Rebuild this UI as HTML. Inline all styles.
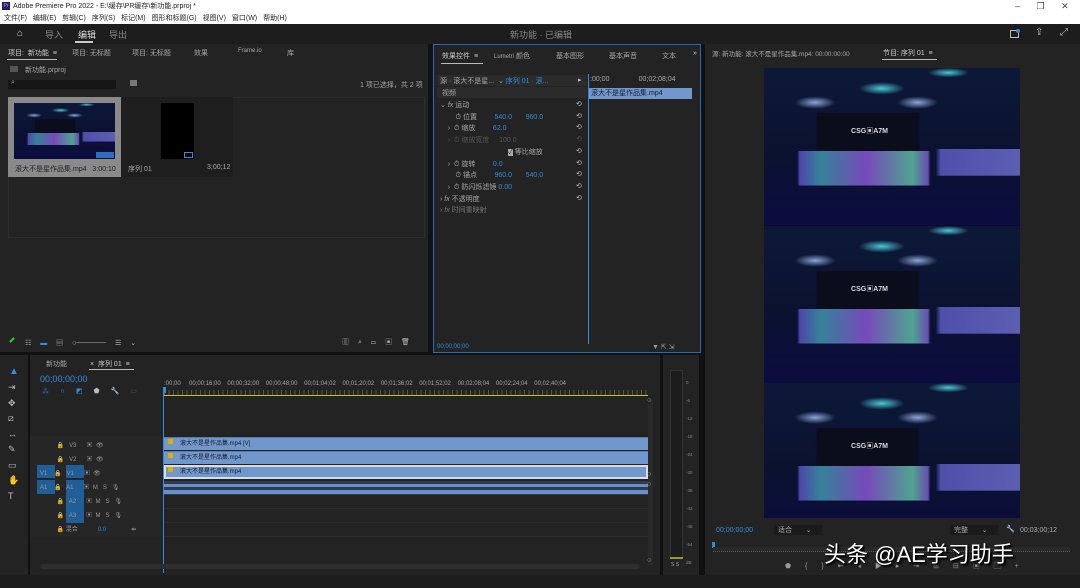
<!DOCTYPE html>
<html><head><meta charset="utf-8"><style>
*{margin:0;padding:0;box-sizing:border-box}
body{width:1080px;height:588px;overflow:hidden;background:#111;font-family:"Liberation Sans","Noto Sans CJK SC",sans-serif;font-size:7px;color:#a8a8a8;position:relative}
.a{position:absolute;white-space:nowrap}
.p{position:absolute;background:#232323}
.blue{color:#2f8ce0}
.vid{position:absolute;overflow:hidden;background:
linear-gradient(90deg,transparent 13%,rgba(90,80,190,.85) 14%,rgba(60,150,170,.85) 22%,rgba(130,80,200,.9) 40%,rgba(90,190,160,.85) 58%,rgba(120,90,200,.85) 64%,transparent 65%) 0 68%/100% 22% no-repeat,
linear-gradient(90deg,transparent 67%,rgba(100,100,210,.75) 69%,rgba(120,120,220,.75) 100%) 0 62%/100% 17% no-repeat,
linear-gradient(90deg,transparent 20%,#0b0c1c 21%,#0b0c1c 60%,transparent 61%) 0 38%/100% 25% no-repeat,
radial-gradient(ellipse 9% 4% at 46% 13%,rgba(80,220,230,.9),transparent),
radial-gradient(ellipse 8% 3% at 72% 3%,rgba(80,220,230,.9),transparent),
radial-gradient(ellipse 8% 4% at 20% 22%,rgba(170,200,255,.8),transparent),
radial-gradient(ellipse 8% 4% at 60% 22%,rgba(170,200,255,.8),transparent),
linear-gradient(#0d1838,#0b1230 55%,#0c0c40)}
.vid span{position:absolute;left:34%;top:37%;color:#ddd;font-weight:bold;font-size:7px}
.trk{position:absolute;left:164px;width:484px;background:#7098cc;border-top:1px solid #5a7aa8}
</style></head><body>
<div class="a" style="left:0;top:0;width:1080px;height:24px;background:#fff"></div>
<div class="a" style="left:2px;top:2px;width:8px;height:8px;background:#2a1f5e;color:#b9a7ff;font-size:5px;line-height:8px;text-align:center">Pr</div>
<div class="a" style="left:13px;top:1px;color:#222;font-size:7px">Adobe Premiere Pro 2022 - E:\缓存\PR缓存\新功能.prproj *</div>
<div class="a" style="left:4px;top:13px;color:#222;font-size:7px;word-spacing:4px">文件(F) 编辑(E) 剪辑(C) 序列(S) 标记(M) 图形和标题(G) 视图(V) 窗口(W) 帮助(H)</div>
<div class="a" style="left:1015px;top:1px;color:#444;font-size:9px;word-spacing:14px">– ❐ ✕</div>
<div class="a" style="left:0;top:24px;width:1080px;height:20px;background:#1d1d1d"></div>
<div class="a" style="left:17px;top:28px;color:#ccc;font-size:10px">⌂</div>
<div class="a" style="left:45px;top:28px;color:#888;font-size:9px">导入</div>
<div class="a" style="left:78px;top:28px;color:#ddd;font-size:9px">编辑</div>
<div class="a" style="left:75px;top:41px;width:18px;height:2px;background:#ccc"></div>
<div class="a" style="left:109px;top:28px;color:#888;font-size:9px">导出</div>
<div class="a" style="left:510px;top:28px;color:#888;font-size:9px">新功能 · 已编辑</div>
<div class="a" style="left:1010px;top:30px;width:9px;height:8px;border:1px solid #bbb"></div>
<div class="a" style="left:1016px;top:29px;width:4px;height:4px;background:#2f8ce0;border-radius:50%"></div>
<div class="a" style="left:1035px;top:27px;color:#bbb;font-size:10px">⇪</div>
<div class="a" style="left:1060px;top:27px;color:#bbb;font-size:10px">⤢</div>

<div class="p" style="left:0;top:44px;width:428px;height:308px"></div>
<div class="a" style="left:8px;top:48px;color:#ccc;word-spacing:2px">项目: 新功能 ≡</div>
<div class="a" style="left:7px;top:59px;width:50px;height:1px;background:#bbb"></div>
<div class="a" style="left:72px;top:48px">项目: 无标题</div>
<div class="a" style="left:132px;top:48px">项目: 无标题</div>
<div class="a" style="left:194px;top:48px">效果</div>
<div class="a" style="left:238px;top:48px;font-size:6px">Frame.io</div>
<div class="a" style="left:287px;top:48px">库</div>
<div class="a" style="left:10px;top:66px;width:8px;height:6px;background:#555"></div>
<div class="a" style="left:25px;top:65px">新功能.prproj</div>
<div class="a" style="left:8px;top:80px;width:108px;height:9px;background:#161616"></div>
<div class="a" style="left:11px;top:79px;color:#aaa">⌕</div>
<div class="a" style="left:130px;top:80px;width:7px;height:6px;background:#777"></div>
<div class="a" style="left:360px;top:80px">1 项已选择，共 2 项</div>
<div class="a" style="left:8px;top:97px;width:417px;height:141px;border:1px solid #2d2d2d"></div>
<div class="a" style="left:8px;top:97px;width:113px;height:80px;background:#8a8a8a"></div>
<div class="vid" style="left:14px;top:103px;width:101px;height:56px"></div>
<div class="a" style="left:96px;top:152px;width:18px;height:6px;background:#2f6cc0"></div>
<div class="a" style="left:15px;top:164px;color:#222">滚大不是星作品集.mp4 &nbsp; 3:00:10</div>
<div class="a" style="left:121px;top:97px;width:112px;height:80px;background:#1e1e1e"></div>
<div class="a" style="left:161px;top:103px;width:33px;height:56px;background:#000"></div>
<div class="a" style="left:184px;top:152px;width:9px;height:6px;border:1px solid #2f8ce0"></div>
<div class="a" style="left:128px;top:164px">序列 01</div>
<div class="a" style="left:207px;top:164px">3;00;12</div>
<div class="a" style="left:9px;top:339px;width:6px;height:2px;background:#3c3;transform:rotate(-45deg)"></div>
<div class="a" style="left:25px;top:338px;color:#bbb;word-spacing:7px">☷ <span class="blue">▬</span> ▤ ○────── ☰ ⌄</div>
<div class="a" style="left:342px;top:337px;color:#bbb;word-spacing:7px">▥ ⌕ ▭ ▣ 🗑</div>

<div class="p" style="left:433px;top:44px;width:268px;height:309px;border:1px solid #2a6ab0"></div>
<div class="a" style="left:442px;top:51px;color:#ccc;word-spacing:2px">效果控件 ≡</div>
<div class="a" style="left:441px;top:63px;width:42px;height:1px;background:#bbb"></div>
<div class="a" style="left:494px;top:51px"><span style="font-size:6px">Lumetri</span> 颜色</div>
<div class="a" style="left:556px;top:51px">基本图形</div>
<div class="a" style="left:609px;top:51px">基本声音</div>
<div class="a" style="left:662px;top:51px">文本</div>
<div class="a" style="left:693px;top:50px;color:#ccc">»</div>
<div class="a" style="left:437px;top:75px;width:150px;height:11px;background:#2b2b2b"></div>
<div class="a" style="left:440px;top:76px">源 · 滚大不是星... &nbsp;⌄ <span class="blue">序列 01 · 滚...</span></div>
<div class="a" style="left:578px;top:76px;color:#bbb">▸</div>
<div class="a" style="left:437px;top:87px;width:150px;height:11px;background:#2b2b2b"></div>
<div class="a" style="left:442px;top:88px">视频</div>
<div class="a" style="left:440px;top:100px;line-height:11.7px">
⌄ <i>fx</i> 运动<br>
&nbsp; &nbsp; &nbsp; &nbsp; ⏱ 位置 &nbsp; &nbsp; &nbsp; &nbsp; <span class="blue">540.0 &nbsp; &nbsp; &nbsp; 960.0</span><br>
&nbsp; &nbsp; › &nbsp;⏱ 缩放 &nbsp; &nbsp; &nbsp; &nbsp; <span class="blue">62.0</span><br>
<span style="color:#555">&nbsp; &nbsp; › &nbsp;⏱ 缩放宽度 &nbsp; &nbsp; 100.0</span><br>
&nbsp; &nbsp; &nbsp; &nbsp; &nbsp; &nbsp; &nbsp; &nbsp; &nbsp; &nbsp; &nbsp; &nbsp; &nbsp; &nbsp; &nbsp; &nbsp; &nbsp; &nbsp;<span style="background:#aaa;color:#333">✓</span> 等比缩放<br>
&nbsp; &nbsp; › &nbsp;⏱ 旋转 &nbsp; &nbsp; &nbsp; &nbsp; <span class="blue">0.0</span><br>
&nbsp; &nbsp; &nbsp; &nbsp; ⏱ 锚点 &nbsp; &nbsp; &nbsp; &nbsp; <span class="blue">960.0 &nbsp; &nbsp; &nbsp; 540.0</span><br>
&nbsp; &nbsp; › &nbsp;⏱ 防闪烁滤镜 <span class="blue">0.00</span><br>
› <i>fx</i> 不透明度<br>
<span style="color:#777">› <i>fx</i> 时间重映射</span></div>
<div class="a" style="left:576px;top:99px;color:#bbb;line-height:11.7px">⟲<br>⟲<br>⟲<br><span style="color:#555">⟲</span><br>⟲<br>⟲<br>⟲<br>⟲<br>⟲</div>
<div class="a" style="left:588px;top:74px;width:1px;height:270px;background:#2f8ce0"></div>
<div class="a" style="left:590px;top:76px">:00;00 &nbsp; &nbsp; &nbsp; &nbsp; &nbsp; &nbsp; &nbsp; 00;02;08;04</div>
<div class="a" style="left:589px;top:88px;width:103px;height:11px;background:#7098cc;color:#1a1a2a;padding-left:2px;line-height:11px">滚大不是星作品集.mp4</div>
<div class="a" style="left:437px;top:344px;font-size:6px"><span class="blue">00;00;00;00</span></div>
<div class="a" style="left:652px;top:343px;color:#999">▼ ⇱ ⇲</div>

<div class="p" style="left:705px;top:44px;width:375px;height:531px"></div>
<div class="a" style="left:712px;top:48px;font-size:6.5px">源: 新功能: 滚大不是星作品集.mp4: 00:00:00:00</div>
<div class="a" style="left:883px;top:48px;color:#ccc">节目: 序列 01 &nbsp;≡</div>
<div class="a" style="left:882px;top:59px;width:55px;height:1px;background:#bbb"></div>
<div class="a" style="left:764px;top:68px;width:256px;height:450px;background:#0a0a30"></div>
<div class="vid" style="left:764px;top:68px;width:256px;height:157px"><span>CSG▣A7M</span></div>
<div class="vid" style="left:764px;top:226px;width:256px;height:157px"><span>CSG▣A7M</span></div>
<div class="vid" style="left:764px;top:383px;width:256px;height:157px;clip-path:inset(0 0 22px 0)"><span>CSG▣A7M</span></div>
<div class="a blue" style="left:716px;top:527px;font-size:7px">00;00;00;00</div>
<div class="a" style="left:774px;top:525px;width:48px;height:10px;background:#1b1b1b;padding-left:4px">适合 &nbsp; &nbsp; &nbsp; ⌄</div>
<div class="a" style="left:950px;top:525px;width:48px;height:10px;background:#1b1b1b;padding-left:4px">完整 &nbsp; &nbsp; &nbsp; ⌄</div>
<div class="a" style="left:1006px;top:525px;color:#bbb">🔧</div>
<div class="a" style="left:1020px;top:527px">00;03;00;12</div>
<div class="a" style="left:712px;top:542px;width:3px;height:6px;background:#2f8ce0"></div>
<div class="a" style="left:713px;top:547px;width:357px;height:5px;background:#2a2a2a;border-bottom:1px dotted #555"></div>
<div class="a" style="left:785px;top:561px;color:#999;word-spacing:12px">⬟ { } ⇤ ◂ ▶ ▸ ⇥ ⊞ ⊟ ▣ ▢ +</div>
<div class="a" style="left:824px;top:537px;color:#fff;font-size:22px;text-shadow:1px 1px 1px #000,2px 2px 2px #000">头条 @AE学习助手</div>

<div class="p" style="left:0;top:355px;width:28px;height:220px"></div>
<div class="a" style="left:9px;top:366px;color:#2f8ce0;font-size:10px">▲</div>
<div class="a" style="left:8px;top:380px;color:#bbb;font-size:9px;line-height:15.5px">⇥<br>✥<br>⧄<br>↔<br>✎<br>▭<br>✋<br>T</div>

<div class="p" style="left:30px;top:355px;width:630px;height:220px"></div>
<div class="a" style="left:46px;top:359px">新功能</div>
<div class="a" style="left:90px;top:359px;color:#ccc">× &nbsp;序列 01 &nbsp;≡</div>
<div class="a" style="left:89px;top:369px;width:45px;height:1px;background:#bbb"></div>
<div class="a blue" style="left:40px;top:374px;font-size:9px">00;00;00;00</div>
<div class="a" style="left:42px;top:386px;color:#2f8ce0;word-spacing:9px">⁂ ∩ ◩ <span style="color:#bbb">⬟ 🔧 <span style="color:#555">▭</span></span></div>
<div class="a" style="left:164px;top:381px;font-size:6px">:00;00 &nbsp; &nbsp; 00;00;16;00 &nbsp; &nbsp;00;00;32;00 &nbsp; &nbsp;00;00;48;00 &nbsp; &nbsp;00;01;04;02 &nbsp; &nbsp;00;01;20;02 &nbsp; &nbsp;00;01;36;02 &nbsp; &nbsp;00;01;52;02 &nbsp; &nbsp;00;02;08;04 &nbsp; &nbsp;00;02;24;04 &nbsp; &nbsp;00;02;40;04</div>
<div class="a" style="left:164px;top:390px;width:484px;height:5px;background:repeating-linear-gradient(90deg,#555 0 1px,transparent 1px 4.5px)"></div>
<div class="a" style="left:164px;top:395px;width:484px;height:1px;background:#c8c800"></div>
<div class="a" style="left:163px;top:388px;width:1px;height:185px;background:#2f8ce0"></div>
<div class="a" style="left:163px;top:387px;width:3px;height:6px;background:#2f8ce0"></div>
<div class="a" style="left:30px;top:436px;width:133px;height:102px;background:#262626"></div>
<div class="a" style="left:37px;top:465px;width:18px;height:13px;background:#1f5e96"></div>
<div class="a" style="left:37px;top:480px;width:18px;height:14px;background:#1f5e96"></div>
<div class="a" style="left:66px;top:465px;width:18px;height:13px;background:#1f5e96"></div>
<div class="a" style="left:66px;top:480px;width:18px;height:43px;background:#1f5e96"></div>
<div class="a" style="left:40px;top:439px;line-height:14px;font-size:6px;color:#999">
&nbsp; &nbsp; &nbsp; &nbsp; &nbsp; 🔒 &nbsp; V3 &nbsp; &nbsp; &nbsp;▣ &nbsp;👁<br>
&nbsp; &nbsp; &nbsp; &nbsp; &nbsp; 🔒 &nbsp; V2 &nbsp; &nbsp; &nbsp;▣ &nbsp;👁<br>
V1 &nbsp; &nbsp;🔒 &nbsp; V1 &nbsp; &nbsp; &nbsp;▣ &nbsp;👁<br>
A1 &nbsp; &nbsp;🔒 &nbsp; A1 &nbsp; &nbsp; &nbsp;▣ &nbsp;M &nbsp; S &nbsp; 🎙<br>
&nbsp; &nbsp; &nbsp; &nbsp; &nbsp; 🔒 &nbsp; A2 &nbsp; &nbsp; &nbsp;▣ &nbsp;M &nbsp; S &nbsp; 🎙<br>
&nbsp; &nbsp; &nbsp; &nbsp; &nbsp; 🔒 &nbsp; A3 &nbsp; &nbsp; &nbsp;▣ &nbsp;M &nbsp; S &nbsp; 🎙<br>
&nbsp; &nbsp; &nbsp; &nbsp; &nbsp; 🔒 混合 &nbsp; &nbsp; &nbsp; &nbsp; &nbsp; &nbsp;<span class="blue">0.0</span> &nbsp; &nbsp; &nbsp; &nbsp; &nbsp; &nbsp; &nbsp; ⇹</div>
<div class="trk" style="top:437px;height:13px;padding-left:16px;color:#1a1a2a;font-size:6px;line-height:12px">滚大不是星作品集.mp4 [V]</div>
<div class="trk" style="top:451px;height:13px;padding-left:16px;color:#1a1a2a;font-size:6px;line-height:12px">滚大不是星作品集.mp4</div>
<div class="trk" style="top:465px;height:14px;border:2px solid #ddd;padding-left:14px;color:#1a1a2a;font-size:6px;line-height:10px">滚大不是星作品集.mp4</div>
<div class="a" style="left:168px;top:439px;width:5px;height:5px;background:#d8b400"></div>
<div class="a" style="left:168px;top:453px;width:5px;height:5px;background:#d8b400"></div>
<div class="a" style="left:168px;top:467px;width:5px;height:5px;background:#d8b400"></div>
<div class="a" style="left:164px;top:481px;width:484px;height:14px;background:#2c3c54"></div>
<div class="a" style="left:164px;top:484px;width:484px;height:3px;background:#6a90c4"></div>
<div class="a" style="left:164px;top:490px;width:484px;height:4px;background:#6a90c4"></div>
<div class="a" style="left:164px;top:508px;width:484px;height:1px;background:#2c2c2c"></div>
<div class="a" style="left:164px;top:522px;width:484px;height:1px;background:#2c2c2c"></div>
<div class="a" style="left:164px;top:536px;width:484px;height:1px;background:#2c2c2c"></div>
<div class="a" style="left:648px;top:400px;width:5px;height:165px;background:#2a2a2a"></div>
<div class="a" style="left:647px;top:398px;color:#aaa;line-height:5px">○</div>
<div class="a" style="left:647px;top:472px;color:#aaa;line-height:5px">○</div>
<div class="a" style="left:647px;top:482px;color:#aaa;line-height:5px">○</div>
<div class="a" style="left:647px;top:558px;color:#aaa;line-height:5px">○</div>
<div class="a" style="left:40px;top:564px;width:600px;height:5px;background:#2e2e2e;border-radius:3px"></div>
<div class="p" style="left:663px;top:355px;width:36px;height:220px"></div>
<div class="a" style="left:670px;top:370px;width:13px;height:188px;background:#1c1c1c;border:1px solid #333"></div>
<div class="a" style="left:670px;top:557px;width:13px;height:2px;background:#9a9a20"></div>
<div class="a" style="left:686px;top:374px;font-size:4.5px;color:#888;line-height:18px">0<br>-6<br>-12<br>-18<br>-24<br>-30<br>-36<br>-42<br>-48<br>-54<br>dB</div>
<div class="a" style="left:671px;top:562px;font-size:5px">S S</div>
<div class="a" style="left:0;top:575px;width:1080px;height:13px;background:#1d1d1d"></div>
</body></html>
